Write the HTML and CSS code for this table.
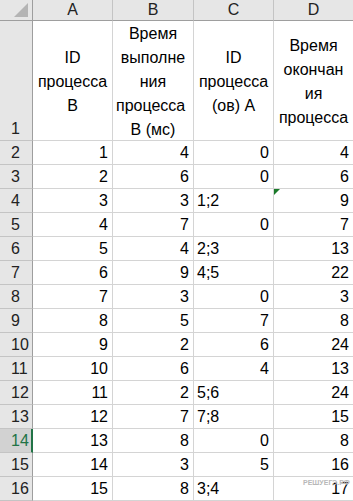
FILE: index.html
```html
<!DOCTYPE html>
<html lang="ru">
<head>
<meta charset="utf-8">
<link rel="stylesheet" href="styles.css">
</head>
<body>
<div class="sheet">
  <div class="corner"><span class="tri"></span></div>
  <div class="colhead">A</div>
  <div class="colhead">B</div>
  <div class="colhead">C</div>
  <div class="colhead">D</div>

  <div class="rowhead rowhead-tall">1</div>
  <div class="cell title"><div>ID</div><div>процесса</div><div>B</div></div>
  <div class="cell title"><div>Время</div><div>выполне</div><div>ния</div><div class="overflow">процесса</div><div>B (мс)</div></div>
  <div class="cell title"><div>ID</div><div>процесса</div><div>(ов) A</div></div>
  <div class="cell title"><div>Время</div><div>окончан</div><div>ия</div><div>процесса</div></div>

  <div class="rowhead">2</div><div class="cell num">1</div><div class="cell num">4</div><div class="cell num">0</div><div class="cell num">4</div>
  <div class="rowhead">3</div><div class="cell num">2</div><div class="cell num">6</div><div class="cell num">0</div><div class="cell num">6</div>
  <div class="rowhead">4</div><div class="cell num">3</div><div class="cell num">3</div><div class="cell txt">1;2</div><div class="cell num flagged"><span class="flag"></span>9</div>
  <div class="rowhead">5</div><div class="cell num">4</div><div class="cell num">7</div><div class="cell num">0</div><div class="cell num">7</div>
  <div class="rowhead">6</div><div class="cell num">5</div><div class="cell num">4</div><div class="cell txt">2;3</div><div class="cell num">13</div>
  <div class="rowhead">7</div><div class="cell num">6</div><div class="cell num">9</div><div class="cell txt">4;5</div><div class="cell num">22</div>
  <div class="rowhead">8</div><div class="cell num">7</div><div class="cell num">3</div><div class="cell num">0</div><div class="cell num">3</div>
  <div class="rowhead">9</div><div class="cell num">8</div><div class="cell num">5</div><div class="cell num">7</div><div class="cell num">8</div>
  <div class="rowhead">10</div><div class="cell num">9</div><div class="cell num">2</div><div class="cell num">6</div><div class="cell num">24</div>
  <div class="rowhead">11</div><div class="cell num">10</div><div class="cell num">6</div><div class="cell num">4</div><div class="cell num">13</div>
  <div class="rowhead">12</div><div class="cell num">11</div><div class="cell num">2</div><div class="cell txt">5;6</div><div class="cell num">24</div>
  <div class="rowhead">13</div><div class="cell num">12</div><div class="cell num">7</div><div class="cell txt">7;8</div><div class="cell num">15</div>
  <div class="rowhead active">14</div><div class="cell num">13</div><div class="cell num">8</div><div class="cell num">0</div><div class="cell num">8</div>
  <div class="rowhead">15</div><div class="cell num">14</div><div class="cell num">3</div><div class="cell num">5</div><div class="cell num">16</div>
  <div class="rowhead">16</div><div class="cell num">15</div><div class="cell num">8</div><div class="cell txt">3;4</div><div class="cell num">17</div>
</div>
<div class="watermark">РЕШУЕГЭ.РФ</div>
</body>
</html>
```

FILE: styles.css
```css
html, body {
  margin: 0;
  padding: 0;
  background: #ffffff;
  overflow: hidden;
}

body {
  font-family: "Liberation Sans", Arial, sans-serif;
  font-size: 16px;
  color: #000;
  position: relative;
  width: 353px;
  height: 501px;
}

.sheet {
  display: grid;
  grid-template-columns: 33px 80px 81px 80px 80px;
  grid-template-rows: 21px 120px repeat(15, 24px);
}

.sheet > div {
  box-sizing: border-box;
  overflow: hidden;
  white-space: nowrap;
}

.corner {
  background: #e6e6e6;
  border-right: 1px solid #9e9e9e;
  border-bottom: 1px solid #9e9e9e;
  position: relative;
}

.tri {
  position: absolute;
  right: 4px;
  bottom: 3px;
  width: 0;
  height: 0;
  border-left: 14px solid transparent;
  border-bottom: 14px solid #b4b4b4;
}

.colhead {
  background: #e6e6e6;
  border-right: 1px solid #c4c4c4;
  border-bottom: 1px solid #9e9e9e;
  text-align: center;
  line-height: 20px;
  color: #222;
}

.rowhead {
  background: #e6e6e6;
  border-right: 1px solid #9e9e9e;
  border-bottom: 1px solid #c4c4c4;
  padding-left: 11px;
  line-height: 23px;
  color: #222;
}

.rowhead-tall {
  display: flex;
  align-items: flex-end;
  padding-bottom: 0;
}

.rowhead.active {
  background: #d2d2d2;
  color: #217346;
  border-right: 2px solid #217346;
}

.cell {
  border-right: 1px solid #d4d4d4;
  border-bottom: 1px solid #d4d4d4;
  line-height: 23px;
  position: relative;
}

.num {
  text-align: right;
  padding-right: 4px;
}

.txt {
  text-align: left;
  padding-left: 3px;
}

.title {
  display: flex;
  flex-direction: column;
  justify-content: center;
  text-align: center;
  line-height: 24px;
  padding-top: 2px;
}

.title .overflow {
  text-align: left;
  padding-left: 3px;
}

.flag {
  position: absolute;
  left: 0;
  top: 0;
  width: 0;
  height: 0;
  border-top: 6px solid #1a7a2a;
  border-right: 6px solid transparent;
}

.watermark {
  position: absolute;
  left: 303px;
  top: 479px;
  font-family: "Liberation Sans", Arial, sans-serif;
  font-size: 7px;
  line-height: 8px;
  font-weight: bold;
  color: #b8b8b8;
}
```
